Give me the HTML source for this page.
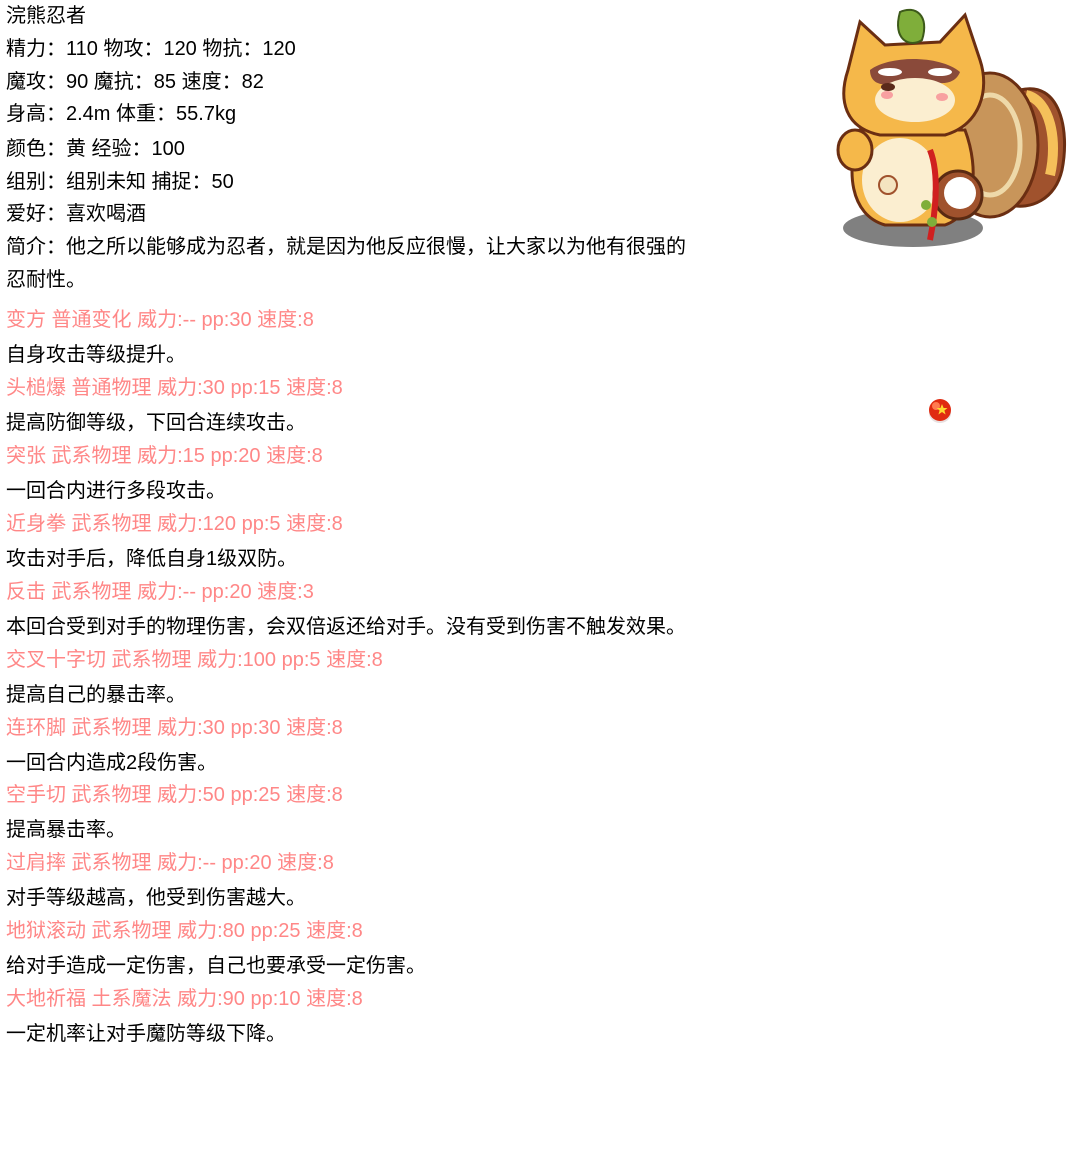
<!DOCTYPE html>
<html><head><meta charset="utf-8"><style>
html,body{margin:0;padding:0;background:#fff;width:1080px;height:1152px;overflow:hidden;position:relative}
.l{position:absolute;left:6px;font-family:"Liberation Sans","Noto Sans CJK SC",sans-serif;font-size:20px;line-height:26px;color:#000;white-space:nowrap}
.p{color:#ff8787}
</style></head><body>
<div class="l" style="top:3px">浣熊忍者</div>
<div class="l" style="top:36px">精力：110 物攻：120 物抗：120</div>
<div class="l" style="top:69px">魔攻：90 魔抗：85 速度：82</div>
<div class="l" style="top:101px">身高：2.4m 体重：55.7kg</div>
<div class="l" style="top:136px">颜色：黄 经验：100</div>
<div class="l" style="top:169px">组别：组别未知 捕捉：50</div>
<div class="l" style="top:201px">爱好：喜欢喝酒</div>
<div class="l" style="top:234px">简介：他之所以能够成为忍者，就是因为他反应很慢，让大家以为他有很强的</div>
<div class="l" style="top:267px">忍耐性。</div>
<div class="l p" style="top:307px">变方 普通变化 威力:-- pp:30 速度:8</div>
<div class="l" style="top:342px">自身攻击等级提升。</div>
<div class="l p" style="top:375px">头槌爆 普通物理 威力:30 pp:15 速度:8</div>
<div class="l" style="top:410px">提高防御等级，下回合连续攻击。</div>
<div class="l p" style="top:443px">突张 武系物理 威力:15 pp:20 速度:8</div>
<div class="l" style="top:478px">一回合内进行多段攻击。</div>
<div class="l p" style="top:511px">近身拳 武系物理 威力:120 pp:5 速度:8</div>
<div class="l" style="top:546px">攻击对手后，降低自身1级双防。</div>
<div class="l p" style="top:579px">反击 武系物理 威力:-- pp:20 速度:3</div>
<div class="l" style="top:614px">本回合受到对手的物理伤害，会双倍返还给对手。没有受到伤害不触发效果。</div>
<div class="l p" style="top:647px">交叉十字切 武系物理 威力:100 pp:5 速度:8</div>
<div class="l" style="top:682px">提高自己的暴击率。</div>
<div class="l p" style="top:715px">连环脚 武系物理 威力:30 pp:30 速度:8</div>
<div class="l" style="top:750px">一回合内造成2段伤害。</div>
<div class="l p" style="top:782px">空手切 武系物理 威力:50 pp:25 速度:8</div>
<div class="l" style="top:817px">提高暴击率。</div>
<div class="l p" style="top:850px">过肩摔 武系物理 威力:-- pp:20 速度:8</div>
<div class="l" style="top:885px">对手等级越高，他受到伤害越大。</div>
<div class="l p" style="top:918px">地狱滚动 武系物理 威力:80 pp:25 速度:8</div>
<div class="l" style="top:953px">给对手造成一定伤害，自己也要承受一定伤害。</div>
<div class="l p" style="top:986px">大地祈福 土系魔法 威力:90 pp:10 速度:8</div>
<div class="l" style="top:1021px">一定机率让对手魔防等级下降。</div>

<svg style="position:absolute;left:830px;top:0" width="240" height="250" viewBox="0 0 240 250">
<ellipse cx="83" cy="228" rx="70" ry="19" fill="#808080"/>
<path d="M190 90 C230 80 240 130 232 170 C225 200 200 210 180 205 L160 120 Z" fill="#a0522d" stroke="#6b2e12" stroke-width="3"/>
<path d="M196 95 C220 100 228 140 220 175" stroke="#f5c05a" stroke-width="10" fill="none"/>
<ellipse cx="160" cy="145" rx="48" ry="72" fill="#c8955a" stroke="#6b2e12" stroke-width="3"/>
<ellipse cx="160" cy="145" rx="30" ry="50" fill="none" stroke="#eed9a9" stroke-width="5"/>
<path d="M30 130 C15 170 20 215 55 225 L115 225 C145 215 150 170 135 130 Z" fill="#f5b84a" stroke="#6b2e12" stroke-width="3"/>
<ellipse cx="70" cy="180" rx="38" ry="42" fill="#fbeed0"/>
<circle cx="58" cy="185" r="9" fill="#f4e4c0" stroke="#a0522d" stroke-width="2"/>
<ellipse cx="25" cy="150" rx="17" ry="20" fill="#f5b84a" stroke="#6b2e12" stroke-width="3"/>
<path d="M18 70 L30 22 L55 45 L110 42 L135 15 L150 60 C160 90 150 125 115 135 L50 135 C15 128 8 100 18 70 Z" fill="#f5b84a" stroke="#6b2e12" stroke-width="3"/>
<path d="M40 70 C60 55 110 55 130 72 C125 85 110 85 95 80 L70 80 C55 88 40 85 40 70 Z" fill="#8a4a3a"/>
<ellipse cx="85" cy="100" rx="40" ry="22" fill="#fbeed0"/>
<ellipse cx="60" cy="72" rx="12" ry="4" fill="#fff"/>
<ellipse cx="110" cy="72" rx="12" ry="4" fill="#fff"/>
<ellipse cx="57" cy="95" rx="6" ry="4" fill="#f8a0a0"/>
<ellipse cx="112" cy="97" rx="6" ry="4" fill="#f8a0a0"/>
<ellipse cx="58" cy="87" rx="7" ry="4" fill="#5a2a1a"/>
<path d="M70 12 C85 5 100 15 92 40 C80 48 62 40 70 12 Z" fill="#7fae3a" stroke="#3d5a1a" stroke-width="2"/>
<circle cx="128" cy="195" r="24" fill="#a0522d" stroke="#5a2a12" stroke-width="3"/>
<circle cx="130" cy="193" r="16" fill="#fff"/>
<path d="M100 150 C110 175 105 215 100 240" stroke="#d02020" stroke-width="6" fill="none"/>
<circle cx="96" cy="205" r="5" fill="#7fae3a"/>
<circle cx="102" cy="222" r="5" fill="#7fae3a"/>
</svg>

<svg style="position:absolute;left:926px;top:397px" width="28" height="28" viewBox="0 0 28 28">
<ellipse cx="14" cy="16" rx="11" ry="10" fill="#e8e0e0"/>
<circle cx="14" cy="13" r="11" fill="#e02a10"/>
<circle cx="10" cy="9" r="4" fill="#ff7a50"/>
<polygon points="16,7 17.6,11 21.5,11 18.4,13.5 19.6,17.5 16,15 12.4,17.5 13.6,13.5 10.5,11 14.4,11" fill="#ffd830"/>
</svg>
</body></html>
